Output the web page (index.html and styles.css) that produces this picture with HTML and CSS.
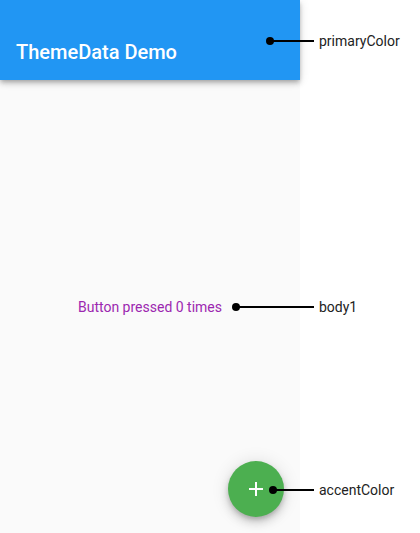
FILE: index.html
```html
<!DOCTYPE html>
<html>
<head>
<meta charset="utf-8">
<link rel="stylesheet" href="styles.css">
</head>
<body>
<div class="stage">
  <div class="phone">
    <header class="appbar">
      <h1 class="title">ThemeData Demo</h1>
    </header>
    <main class="content">
      <p class="body1">Button pressed 0 times</p>
    </main>
    <button class="fab" aria-label="Add">
      <svg width="14" height="14" viewBox="0 0 14 14"><path d="M7 0v14M0 7h14" stroke="#fff" stroke-width="2"/></svg>
    </button>
  </div>
  <div class="callout callout-primary"><span class="dot"></span><span class="line"></span><span class="label">primaryColor</span></div>
  <div class="callout callout-body"><span class="dot"></span><span class="line"></span><span class="label">body1</span></div>
  <div class="callout callout-accent"><span class="dot"></span><span class="line"></span><span class="label">accentColor</span></div>
</div>
</body>
</html>
```
FILE: styles.css
```css
html, body {
  margin: 0;
  padding: 0;
  background: #fff;
  font-family: Roboto, "Noto Sans", sans-serif;
}
.stage {
  position: relative;
  width: 420px;
  height: 533px;
  overflow: hidden;
}
.phone {
  position: relative;
  width: 300px;
  height: 533px;
  background: #fafafa;
  display: flex;
  flex-direction: column;
}
.appbar {
  height: 80px;
  flex: none;
  background: #2196f3;
  box-shadow: 0 2px 4px -1px rgba(0,0,0,.2), 0 4px 5px 0 rgba(0,0,0,.14), 0 1px 10px 0 rgba(0,0,0,.12);
  display: flex;
  align-items: center;
  padding: 24px 16px 0;
  box-sizing: border-box;
  position: relative;
  z-index: 1;
}
.title {
  margin: 0;
  color: #fff;
  font-size: 20px;
  font-weight: 500;
  line-height: 28px;
}
.content {
  flex: 1;
  display: flex;
  align-items: center;
  justify-content: center;
}
.body1 {
  margin: 0;
  color: #9c27b0;
  font-size: 14px;
  line-height: 20px;
}
.fab {
  position: absolute;
  right: 16px;
  bottom: 16px;
  width: 56px;
  height: 56px;
  border-radius: 50%;
  border: none;
  padding: 0;
  background: #4caf50;
  display: flex;
  align-items: center;
  justify-content: center;
  box-shadow: 0 3px 5px -1px rgba(0,0,0,.2), 0 6px 10px 0 rgba(0,0,0,.14), 0 1px 18px 0 rgba(0,0,0,.12);
}
.callout {
  position: absolute;
  display: flex;
  align-items: center;
  height: 20px;
  z-index: 2;
}
.dot {
  width: 8px;
  height: 8px;
  border-radius: 50%;
  background: #000;
  flex: none;
}
.line {
  height: 2px;
  background: #000;
  margin-left: -2px;
  margin-right: 5px;
}
.label {
  font-size: 14px;
  color: #222;
}
.callout-primary { left: 266px; top: 31px; }
.callout-primary .line { width: 42px; }
.callout-body { left: 232px; top: 297px; }
.callout-body .line { width: 76px; }
.callout-accent { left: 269px; top: 480px; }
.callout-accent .line { width: 39px; }
```
